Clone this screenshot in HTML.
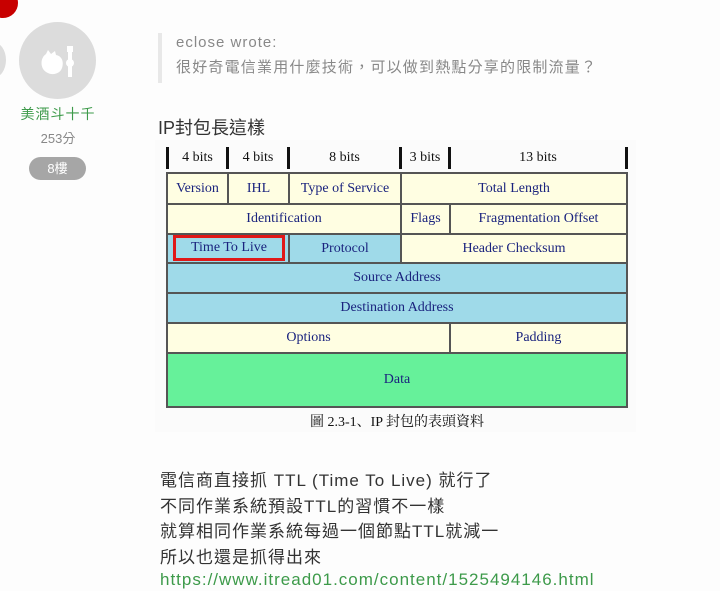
<!DOCTYPE html>
<html><head><meta charset="utf-8"><style>
body{margin:0;width:720px;height:591px;background:#fdfdfd;position:relative;overflow:hidden;font-family:"Liberation Sans","Noto Sans CJK TC",sans-serif}
.a{position:absolute}
.c{position:absolute;box-sizing:border-box;border:2px solid #555;display:flex;align-items:center;justify-content:center;font-family:"Liberation Serif","Noto Serif CJK SC",serif;font-size:14px;color:#1a237e}
.y{background:#fffee2}.b{background:#9fdae9}.g{background:#66f19a}
.bar{position:absolute;top:147px;width:3px;height:22px;background:#111}
.h{position:absolute;top:150px;font-family:"Liberation Serif",serif;font-size:14px;color:#111;text-align:center}
.t{position:absolute;left:160px;font-size:17px;color:#333;white-space:nowrap;letter-spacing:1px}
</style></head><body>
<div class="a" style="left:-12px;top:-12px;width:30px;height:30px;border-radius:50%;background:#c80000"></div>
<div class="a" style="left:-20px;top:42px;width:26px;height:36px;border-radius:50%;background:#ddd"></div>
<div class="a" style="left:19px;top:22px;width:77px;height:77px;border-radius:50%;background:#dcdcdc"></div>
<svg class="a" style="left:38px;top:44px" width="40" height="34" viewBox="0 0 40 34"><path d="M10 6 L13 10 L17 7 L18 11 C24 12 26 18 24 24 C22 30 14 32 8 28 C2 24 2 14 8 10 Z" fill="#fff"/><rect x="30" y="3" width="4" height="30" fill="#fff"/><circle cx="32" cy="19" r="4" fill="#fff"/><rect x="29" y="2" width="6" height="6" fill="#fff"/></svg>
<div class="a" style="left:0;width:116px;top:104px;text-align:center;color:#3d9a4a;font-size:14px;letter-spacing:1px">美酒斗十千</div>
<div class="a" style="left:0;width:116px;top:128px;text-align:center;color:#888;font-size:13px">253分</div>
<div class="a" style="left:29px;top:157px;width:57px;height:23px;border-radius:12px;background:#a6a6a6;color:#fff;font-size:13px;text-align:center;line-height:23px">8樓</div>
<div class="a" style="left:158px;top:33px;width:4px;height:50px;background:#e8e8e8"></div>
<div class="a" style="left:176px;top:34px;font-size:15px;color:#888;letter-spacing:1px">eclose wrote:</div>
<div class="a" style="left:176px;top:56px;font-size:15px;color:#888;letter-spacing:1.2px;white-space:nowrap">很好奇電信業用什麼技術，可以做到熱點分享的限制流量？</div>
<div class="a" style="left:158px;top:114px;font-size:18px;color:#333">IP封包長這樣</div>
<div class="a" style="left:155px;top:140px;width:481px;height:292px;background:#fbfbfb"></div>
<div class="bar" style="left:166px"></div><div class="bar" style="left:226px"></div><div class="bar" style="left:287px"></div><div class="bar" style="left:399px"></div><div class="bar" style="left:448px"></div><div class="bar" style="left:625px"></div>
<div class="h" style="left:169px;width:57px">4 bits</div><div class="h" style="left:229px;width:58px">4 bits</div><div class="h" style="left:290px;width:109px">8 bits</div><div class="h" style="left:402px;width:46px">3 bits</div><div class="h" style="left:451px;width:174px">13 bits</div>
<div class="c y" style="left:166px;top:172px;width:63px;height:33px">Version</div>
<div class="c y" style="left:227px;top:172px;width:63px;height:33px">IHL</div>
<div class="c y" style="left:288px;top:172px;width:114px;height:33px">Type of Service</div>
<div class="c y" style="left:400px;top:172px;width:228px;height:33px">Total Length</div>
<div class="c y" style="left:166px;top:203px;width:236px;height:32px">Identification</div>
<div class="c y" style="left:400px;top:203px;width:51px;height:32px">Flags</div>
<div class="c y" style="left:449px;top:203px;width:179px;height:32px">Fragmentation Offset</div>
<div class="c b" style="left:166px;top:233px;width:124px;height:31px"></div>
<div class="a" style="left:173px;top:235px;width:112px;height:26px;box-sizing:border-box;border:3px solid #e01818;display:flex;align-items:center;justify-content:center;font-family:'Liberation Serif',serif;font-size:14px;color:#1a237e">Time To Live</div>
<div class="c b" style="left:288px;top:233px;width:114px;height:31px">Protocol</div>
<div class="c y" style="left:400px;top:233px;width:228px;height:31px">Header Checksum</div>
<div class="c b" style="left:166px;top:262px;width:462px;height:32px">Source Address</div>
<div class="c b" style="left:166px;top:292px;width:462px;height:32px">Destination Address</div>
<div class="c y" style="left:166px;top:322px;width:285px;height:32px">Options</div>
<div class="c y" style="left:449px;top:322px;width:179px;height:32px">Padding</div>
<div class="c g" style="left:166px;top:352px;width:462px;height:56px">Data</div>
<div class="a" style="left:166px;width:462px;top:411px;text-align:center;font-family:'Liberation Serif','Noto Serif CJK SC',serif;font-size:14px;color:#111">圖 2.3-1、IP 封包的表頭資料</div>
<div class="t" style="top:466px">電信商直接抓 TTL (Time To Live) 就行了</div>
<div class="t" style="top:492px">不同作業系統預設TTL的習慣不一樣</div>
<div class="t" style="top:517px">就算相同作業系統每過一個節點TTL就減一</div>
<div class="t" style="top:543px">所以也還是抓得出來</div>
<div class="t" style="top:570px;color:#3d9a4a">https://www.itread01.com/content/1525494146.html</div>
</body></html>
